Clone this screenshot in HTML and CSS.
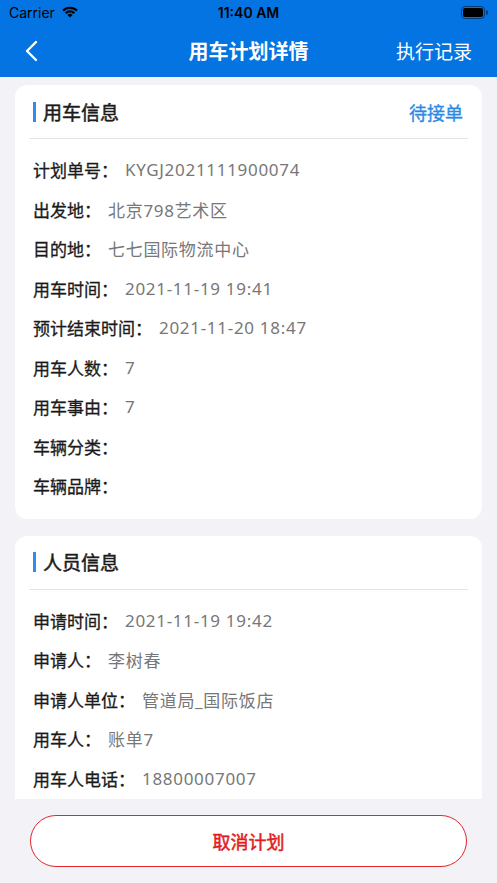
FILE: index.html
```html
<!DOCTYPE html>
<html lang="zh-CN">
<head>
    <meta charset="UTF-8">
    <meta name="viewport" content="width=device-width, initial-scale=1.0">
    <title>用车计划详情</title>
    <link rel="stylesheet" href="styles.css">
</head>
<body>
    <div class="page">
        <div class="topbar">
            <div class="statusbar">
                <div class="status-left">
                    <span class="carrier">Carrier</span>
                    <svg class="wifi" width="18" height="13" viewBox="0 0 18 13">
                        <path d="M9 12.6 L6.4 9.9 A3.8 3.8 0 0 1 11.6 9.9 Z" fill="#000"/>
                        <path d="M3.9 7.4 A7.3 7.3 0 0 1 14.1 7.4 L12.5 9 A5 5 0 0 0 5.5 9 Z" fill="#000"/>
                        <path d="M1.3 4.8 A11 11 0 0 1 16.7 4.8 L15.1 6.4 A8.7 8.7 0 0 0 2.9 6.4 Z" fill="#000"/>
                    </svg>
                </div>
                <div class="time">11:40 AM</div>
                <div class="status-right">
                    <svg width="27" height="13" viewBox="0 0 27 13">
                        <rect x="0.5" y="0.5" width="23" height="12" rx="3.5" fill="none" stroke="#000" stroke-opacity="0.45"/>
                        <rect x="2" y="2" width="20" height="9" rx="2" fill="#000"/>
                        <path d="M25 4.3 A2 2 0 0 1 25 8.7 Z" fill="#000" fill-opacity="0.45"/>
                    </svg>
                </div>
            </div>
            <div class="navbar">
                <div class="nav-back">
                    <svg width="14" height="22" viewBox="0 0 14 22">
                        <path d="M12 2 L3 11 L12 20" fill="none" stroke="#fff" stroke-width="2.4" stroke-linecap="round" stroke-linejoin="round"/>
                    </svg>
                </div>
                <div class="nav-title">用车计划详情</div>
                <div class="nav-action">执行记录</div>
            </div>
        </div>

        <div class="content">
            <div class="card">
                <div class="card-head">
                    <div class="card-title">用车信息</div>
                    <div class="card-status">待接单</div>
                </div>
                <div class="card-body">
                    <div class="row"><span class="label">计划单号：</span><span class="value">KYGJ2021111900074</span></div>
                    <div class="row"><span class="label">出发地：</span><span class="value">北京798艺术区</span></div>
                    <div class="row"><span class="label">目的地：</span><span class="value">七七国际物流中心</span></div>
                    <div class="row"><span class="label">用车时间：</span><span class="value">2021-11-19 19:41</span></div>
                    <div class="row"><span class="label">预计结束时间：</span><span class="value">2021-11-20 18:47</span></div>
                    <div class="row"><span class="label">用车人数：</span><span class="value">7</span></div>
                    <div class="row"><span class="label">用车事由：</span><span class="value">7</span></div>
                    <div class="row"><span class="label">车辆分类：</span><span class="value"></span></div>
                    <div class="row"><span class="label">车辆品牌：</span><span class="value"></span></div>
                </div>
            </div>

            <div class="card">
                <div class="card-head">
                    <div class="card-title">人员信息</div>
                </div>
                <div class="card-body">
                    <div class="row"><span class="label">申请时间：</span><span class="value">2021-11-19 19:42</span></div>
                    <div class="row"><span class="label">申请人：</span><span class="value">李树春</span></div>
                    <div class="row"><span class="label">申请人单位：</span><span class="value">管道局_国际饭店</span></div>
                    <div class="row"><span class="label">用车人：</span><span class="value">账单7</span></div>
                    <div class="row"><span class="label">用车人电话：</span><span class="value">18800007007</span></div>
                </div>
            </div>
        </div>

        <div class="footer">
            <button type="button" class="cancel-btn">取消计划</button>
        </div>
    </div>
</body>
</html>
```

FILE: styles.css
```css
* {
    box-sizing: border-box;
}

body {
    margin: 0;
    font-family: "Noto Sans CJK SC", "Noto Sans", sans-serif;
    background-color: #f2f2f7;
}

.page {
    width: 497px;
    height: 883px;
    display: flex;
    flex-direction: column;
    overflow: hidden;
}

/* top blue area */
.topbar {
    background-color: #0374e2;
    flex-shrink: 0;
}

.statusbar {
    height: 24px;
    display: flex;
    align-items: center;
    justify-content: space-between;
    padding: 0 9px;
    position: relative;
}

.status-left {
    display: flex;
    align-items: center;
    gap: 6px;
}

.carrier {
    font-family: "Inter", "Liberation Sans", sans-serif;
    font-size: 14px;
    color: #000;
}

.wifi {
    margin-top: -1px;
}

.time {
    position: absolute;
    left: 0;
    right: 0;
    text-align: center;
    font-family: "Inter", "Liberation Sans", sans-serif;
    font-size: 14px;
    font-weight: 600;
    color: #000;
}

.status-right {
    display: flex;
    align-items: center;
}

.navbar {
    height: 53px;
    display: flex;
    align-items: center;
    justify-content: space-between;
    padding: 0 25px 0 24px;
    position: relative;
}

.nav-back {
    display: flex;
    align-items: center;
    width: 40px;
}

.nav-title {
    position: absolute;
    left: 0;
    right: 0;
    text-align: center;
    font-size: 20px;
    font-weight: 700;
    color: #fff;
    pointer-events: none;
}

.nav-action {
    font-size: 19px;
    color: #fff;
}

/* scroll area */
.content {
    flex: 1;
    overflow: hidden;
    padding: 8px 15px 0;
    display: flex;
    flex-direction: column;
    gap: 17px;
}

.card {
    background-color: #fff;
    border-radius: 12px;
    flex-shrink: 0;
}

.card-head {
    height: 54px;
    margin: 0 14px;
    padding: 0 5px 0 4px;
    display: flex;
    align-items: center;
    justify-content: space-between;
    border-bottom: 1px solid #e4e4e6;
}

.card-title {
    border-left: 3px solid #2f8ce8;
    padding-left: 7px;
    line-height: 20px;
    font-size: 19px;
    font-weight: 400;
    -webkit-text-stroke: 0.5px #1c1c1c;
    color: #1c1c1c;
}

.card-status {
    font-size: 18px;
    color: #2b88e4;
    -webkit-text-stroke: 0.3px #2b88e4;
}

.card-body {
    padding: 11px 18px 13px;
}

.row {
    height: 39.5px;
    display: flex;
    align-items: center;
    font-size: 17px;
}

.label {
    color: #1a1a1a;
    -webkit-text-stroke: 0.3px #1a1a1a;
}

.value {
    margin-left: 7px;
    color: #777;
    font-family: "Noto Sans", "Noto Sans CJK SC", sans-serif;
    letter-spacing: 0.7px;
}

/* bottom button */
.footer {
    height: 84px;
    flex-shrink: 0;
    padding: 16px 30px;
    background-color: #f2f2f7;
}

.cancel-btn {
    width: 100%;
    height: 52px;
    border: 1.5px solid #e0262b;
    border-radius: 26px;
    background-color: #fff;
    color: #e11d1d;
    font-family: "Noto Sans CJK SC", sans-serif;
    font-size: 18px;
    font-weight: 400;
    -webkit-text-stroke: 0.5px #e11d1d;
}
```
